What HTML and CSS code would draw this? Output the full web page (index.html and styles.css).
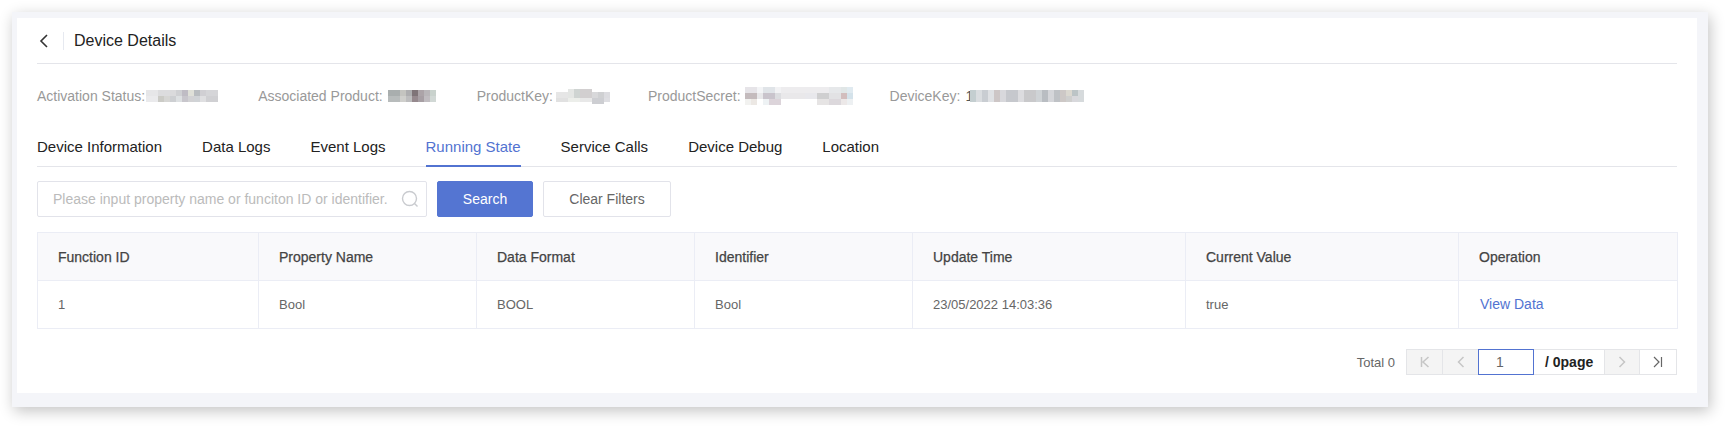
FILE: index.html
```html
<!DOCTYPE html>
<html lang="en">
<head>
<meta charset="utf-8">
<title>Device Details</title>
<link rel="stylesheet" href="styles.css">
</head>
<body>
<div class="frame">
  <main class="panel">
    <header class="title-bar">
      <svg class="back" width="10" height="14" viewBox="0 0 10 14"><path d="M8 1 2 7l6 6" fill="none" stroke="#333" stroke-width="1.6"/></svg>
      <span class="title-sep"></span>
      <h1 class="title">Device Details</h1>
    </header>

    <section class="meta">
      <div class="meta-item meta-status"><span>Activation Status:</span>
        <svg class="redact" width="72" height="12" shape-rendering="crispEdges">
          <rect x="0" width="12" height="6" fill="#e6e6e8"/><rect x="12" width="12" height="6" fill="#dcdcde"/><rect x="24" width="6" height="6" fill="#dadadc"/><rect x="30" width="6" height="6" fill="#cfd0d3"/><rect x="36" width="6" height="6" fill="#bfbcc4"/><rect x="42" width="6" height="6" fill="#dfe0d8"/><rect x="48" width="6" height="6" fill="#b9bdc0"/><rect x="54" width="6" height="6" fill="#d0cfd3"/><rect x="60" width="12" height="6" fill="#d5d5d8"/>
          <rect x="0" y="6" width="12" height="6" fill="#eaeaec"/><rect x="12" y="6" width="6" height="6" fill="#cbcbc6"/><rect x="18" y="6" width="6" height="6" fill="#d6d6d4"/><rect x="24" y="6" width="6" height="6" fill="#cdcfd2"/><rect x="30" y="6" width="6" height="6" fill="#dde0e2"/><rect x="36" y="6" width="6" height="6" fill="#c8c6cc"/><rect x="42" y="6" width="6" height="6" fill="#d2d2d4"/><rect x="48" y="6" width="6" height="6" fill="#d0d3d6"/><rect x="54" y="6" width="6" height="6" fill="#dfdfe1"/><rect x="60" y="6" width="12" height="6" fill="#d0d0d3"/>
        </svg>
      </div>
      <div class="meta-item meta-assoc"><span>Associated Product:</span>
        <svg class="redact" width="48" height="12" shape-rendering="crispEdges">
          <rect x="0" width="12" height="6" fill="#a9aeae"/><rect x="12" width="6" height="6" fill="#c4c4c0"/><rect x="18" width="6" height="6" fill="#aeaeb0"/><rect x="24" width="6" height="6" fill="#7f7478"/><rect x="30" width="6" height="6" fill="#aca4a8"/><rect x="36" width="6" height="6" fill="#b9b6b9"/><rect x="42" width="6" height="6" fill="#c9d2cd"/>
          <rect x="0" y="6" width="12" height="6" fill="#b8bcbc"/><rect x="12" y="6" width="6" height="6" fill="#cfcfcc"/><rect x="18" y="6" width="6" height="6" fill="#bdbdbe"/><rect x="24" y="6" width="6" height="6" fill="#96898e"/><rect x="30" y="6" width="6" height="6" fill="#a79fa4"/><rect x="36" y="6" width="6" height="6" fill="#c0bcc0"/><rect x="42" y="6" width="6" height="6" fill="#d1d8d5"/>
        </svg>
      </div>
      <div class="meta-item meta-key"><span>ProductKey:</span>
        <svg class="redact" width="54" height="15" shape-rendering="crispEdges">
          <rect x="0" y="3" width="12" height="6" fill="#e6e6e6"/><rect x="12" y="0" width="6" height="9" fill="#e4e6e4"/><rect x="18" y="0" width="6" height="9" fill="#cfd4d2"/><rect x="24" y="0" width="12" height="9" fill="#d2cfd0"/><rect x="36" y="3" width="6" height="6" fill="#d8d8da"/><rect x="42" y="3" width="6" height="6" fill="#cfd0d2"/><rect x="48" y="3" width="6" height="6" fill="#dcdce0"/>
          <rect x="0" y="9" width="12" height="4" fill="#e1e1e1"/><rect x="12" y="9" width="12" height="4" fill="#eceeea"/><rect x="24" y="9" width="12" height="4" fill="#e8e8e8"/><rect x="36" y="9" width="12" height="6" fill="#cdced2"/><rect x="48" y="9" width="6" height="4" fill="#dedee2"/>
        </svg>
      </div>
      <div class="meta-item meta-secret"><span>ProductSecret:</span>
        <svg class="redact" width="108" height="18" shape-rendering="crispEdges">
          <rect x="0" y="0" width="12" height="6" fill="#e6e4e8"/><rect x="12" y="0" width="6" height="6" fill="#f3f4f6"/><rect x="18" y="0" width="12" height="6" fill="#e0e4e8"/><rect x="30" y="0" width="6" height="6" fill="#f2f2f4"/><rect x="36" y="0" width="48" height="6" fill="#edecee"/><rect x="84" y="0" width="12" height="6" fill="#e6e8ea"/><rect x="96" y="0" width="6" height="6" fill="#e0e6e6"/><rect x="102" y="0" width="6" height="6" fill="#e0eaf0"/>
          <rect x="0" y="6" width="12" height="6" fill="#c4bbbd"/><rect x="12" y="6" width="6" height="6" fill="#e8e8ea"/><rect x="18" y="6" width="12" height="6" fill="#c9c4cc"/><rect x="30" y="6" width="6" height="6" fill="#dcdde0"/><rect x="36" y="6" width="24" height="6" fill="#e9e8ea"/><rect x="60" y="6" width="12" height="6" fill="#e8e8ec"/><rect x="72" y="6" width="12" height="6" fill="#cfcfd0"/><rect x="84" y="6" width="12" height="6" fill="#e2e2e4"/><rect x="96" y="6" width="6" height="6" fill="#d2bdbd"/><rect x="102" y="6" width="6" height="6" fill="#d4e2ea"/>
          <rect x="0" y="12" width="6" height="6" fill="#f2f2f0"/><rect x="6" y="12" width="6" height="6" fill="#ece8e4"/><rect x="18" y="12" width="6" height="6" fill="#eef2f4"/><rect x="24" y="12" width="12" height="6" fill="#dcd4da"/><rect x="72" y="12" width="12" height="6" fill="#e6e4e4"/><rect x="84" y="12" width="12" height="6" fill="#dcd8dc"/><rect x="96" y="12" width="6" height="6" fill="#ece8e8"/><rect x="102" y="12" width="6" height="6" fill="#edf0f2"/>
        </svg>
      </div>
      <div class="meta-item meta-device"><span>DeviceKey:</span>
        <span class="meta-value">1</span>
        <svg class="redact redact-device" width="114" height="12" shape-rendering="crispEdges">
          <rect x="0" width="6" height="12" fill="#c4ced0"/><rect x="6" width="6" height="12" fill="#dadde0"/><rect x="12" width="6" height="12" fill="#c9cdd2"/><rect x="18" width="6" height="12" fill="#dfe1e4"/><rect x="24" width="6" height="12" fill="#cdc6c6"/><rect x="30" width="6" height="12" fill="#d8d8dc"/><rect x="36" width="12" height="12" fill="#c6c8cd"/><rect x="48" width="6" height="12" fill="#dcdcdf"/><rect x="54" width="12" height="12" fill="#c9c9cb"/><rect x="66" width="6" height="12" fill="#cfd3d6"/><rect x="72" width="6" height="12" fill="#b9bdc2"/><rect x="78" width="6" height="12" fill="#d5d6da"/><rect x="84" width="6" height="12" fill="#bfc2c6"/><rect x="90" width="6" height="12" fill="#cdc8c6"/><rect x="96" width="6" height="6" fill="#dbd8d0"/><rect x="96" y="6" width="6" height="6" fill="#cfcfce"/><rect x="102" width="6" height="6" fill="#bcc4c6"/><rect x="102" y="6" width="6" height="6" fill="#d8d8dc"/><rect x="108" width="6" height="12" fill="#d6dadc"/>
        </svg>
      </div>
    </section>

    <nav class="tabs">
      <a class="tab">Device Information</a>
      <a class="tab">Data Logs</a>
      <a class="tab">Event Logs</a>
      <a class="tab tab-active">Running State</a>
      <a class="tab">Service Calls</a>
      <a class="tab">Device Debug</a>
      <a class="tab">Location</a>
    </nav>

    <form class="filters">
      <div class="search-box">
        <input class="search-input" type="text" placeholder="Please input property name or funciton ID or identifier.">
        <svg class="search-icon" width="18" height="18" viewBox="0 0 18 18"><circle cx="8.5" cy="8.5" r="7" fill="none" stroke="#c9cbcf" stroke-width="1.4"/><path d="m13.5 13.5 3 3" fill="none" stroke="#c9cbcf" stroke-width="1.4"/></svg>
      </div>
      <button class="btn btn-primary" type="button">Search</button>
      <button class="btn btn-plain" type="button">Clear Filters</button>
    </form>

    <table class="data-table">
      <thead>
        <tr>
          <th class="col-id">Function ID</th>
          <th class="col-std">Property Name</th>
          <th class="col-std">Data Format</th>
          <th class="col-std">Identifier</th>
          <th class="col-time">Update Time</th>
          <th class="col-value">Current Value</th>
          <th class="col-op">Operation</th>
        </tr>
      </thead>
      <tbody>
        <tr>
          <td>1</td>
          <td>Bool</td>
          <td>BOOL</td>
          <td>Bool</td>
          <td>23/05/2022 14:03:36</td>
          <td>true</td>
          <td><a class="link">View Data</a></td>
        </tr>
      </tbody>
    </table>

    <footer class="pager">
      <span class="pager-total">Total 0</span>
      <div class="pager-group">
        <span class="pg-btn pg-disabled"><svg width="12" height="12" viewBox="0 0 12 12"><path d="M2.5 1v10M9.5 1 4 6l5.500 5" fill="none" stroke="#c6c6c6" stroke-width="1.500"/></svg></span>
        <span class="pg-btn pg-disabled"><svg width="10" height="12" viewBox="0 0 10 12"><path d="M7.500 1 2.500 6l5 5" fill="none" stroke="#c6c6c6" stroke-width="1.500"/></svg></span>
        <input class="pg-input" type="text" value="1">
        <span class="pg-count">/ 0page</span>
        <span class="pg-btn pg-disabled pg-next"><svg width="10" height="12" viewBox="0 0 10 12"><path d="m2.500 1 5 5-5 5" fill="none" stroke="#c6c6c6" stroke-width="1.500"/></svg></span>
        <span class="pg-btn pg-last"><svg width="12" height="12" viewBox="0 0 12 12"><path d="m2 1 5 5-5 5M9.500 1v10" fill="none" stroke="#666" stroke-width="1.200"/></svg></span>
      </div>
    </footer>
  </main>
</div>
</body>
</html>
```

FILE: styles.css
```css
* { box-sizing: border-box; }

html, body { height: 100%; }

body {
  margin: 0;
  padding: 12px 20px 20px 12px;
  background: #fff;
  font-family: "Liberation Sans", Arial, sans-serif;
  font-size: 14px;
  color: #333;
  overflow: hidden;
}

.frame {
  height: 395px;
  padding: 6px 11px 14px 5px;
  background: #f4f5f9;
  box-shadow: 2px 4px 14px rgba(0, 0, 0, 0.24);
}

.panel {
  height: 375px;
  padding: 0 20px;
  background: #fff;
}

/* Title */
.title-bar {
  display: flex;
  align-items: center;
  height: 46px;
  border-bottom: 1px solid #e4e5ea;
}

.back { margin-left: 2px; flex: none; }

.title-sep {
  width: 1px;
  height: 18px;
  margin: 0 10px 0 14px;
  background: #e6e9f0;
}

.title {
  margin: 0;
  font-size: 16px;
  font-weight: 400;
  color: #222;
}

/* Meta row */
.meta {
  display: flex;
  align-items: center;
  height: 28px;
  margin-top: 18px;
  color: #999;
  font-size: 14px;
}

.meta-item { display: flex; align-items: center; }

.meta-status span { margin-right: 1px; }
.meta-assoc { margin-left: 40px; }
.meta-assoc span { margin-right: 5px; }
.meta-key { margin-left: 41px; }
.meta-key span { margin-right: 3px; }
.meta-secret { margin-left: 38px; }
.meta-secret span { margin-right: 4px; }
.meta-device { margin-left: 37px; }
.meta-device > span:first-child { margin-right: 5px; }

.redact { flex: none; display: block; }
.redact-device { margin-left: -3px; }
.meta-value { color: #555; }

/* Tabs */
.tabs {
  display: flex;
  gap: 40px;
  height: 43px;
  margin-top: 14px;
  border-bottom: 1px solid #e4e5ea;
}

.tab {
  height: 43px;
  padding-top: 13px;
  font-size: 15px;
  line-height: 20px;
  color: #222;
}

.tab-active {
  color: #5273d1;
  border-bottom: 2px solid #5273d1;
}

/* Filters */
.filters {
  display: flex;
  margin-top: 14px;
}

.search-box {
  position: relative;
  width: 390px;
  height: 36px;
  margin-right: 10px;
}

.search-input {
  width: 100%;
  height: 100%;
  padding: 0 38px 0 15px;
  border: 1px solid #e2e3ea;
  border-radius: 2px;
  font: 14px "Liberation Sans", Arial, sans-serif;
  outline: none;
}

.search-input::placeholder { color: #bbb; opacity: 1; }

.search-icon {
  position: absolute;
  right: 8px;
  top: 9px;
}

.btn {
  height: 36px;
  border-radius: 2px;
  font: 14px "Liberation Sans", Arial, sans-serif;
  cursor: pointer;
}

.btn-primary {
  width: 96px;
  margin-right: 10px;
  border: 1px solid #5475d2;
  background: #5475d2;
  color: #fff;
}

.btn-plain {
  width: 128px;
  border: 1px solid #e2e3ea;
  background: #fff;
  color: #666;
}

/* Table */
.data-table {
  width: 1640px;
  margin-top: 15px;
  border-collapse: collapse;
  table-layout: fixed;
  font-size: 13px;
}

.data-table th,
.data-table td {
  height: 48px;
  padding: 0 0 0 20px;
  border: 1px solid #ebedf5;
  text-align: left;
  color: #666;
  font-weight: 400;
}

.data-table th {
  background: #f9f9fb;
  font-size: 14px;
  color: #444;
  -webkit-text-stroke: 0.25px #444;
}

.col-id { width: 221px; }
.col-std { width: 218px; }
.col-time { width: 273px; }
.col-value { width: 273px; }
.col-op { width: 219px; }

.link {
  margin-left: 1px;
  color: #5273d1;
  font-size: 14px;
  vertical-align: 1px;
  cursor: pointer;
}

/* Pager */
.pager {
  display: flex;
  justify-content: flex-end;
  align-items: center;
  height: 26px;
  margin-top: 20px;
}

.pager-total {
  margin-right: 11px;
  color: #666;
  font-size: 13px;
}

.pager-group {
  display: flex;
  height: 26px;
  border: 1px solid #e4e5e8;
}

.pg-btn {
  display: flex;
  align-items: center;
  justify-content: center;
  width: 36px;
  border-right: 1px solid #e4e5e8;
  background: #f4f4f4;
}

.pg-btn:nth-child(2) { width: 35px; border-right: 0; }

.pg-last { width: 36px; background: #fff; border-right: 0; }

.pg-next { width: 35px; }

.pg-input {
  width: 56px;
  height: 26px;
  margin-top: -1px;
  padding: 0 0 0 17px;
  border: 1px solid #5273d1;
  font: 14px "Liberation Sans", Arial, sans-serif;
  color: #666;
  outline: none;
}

.pg-count {
  width: 71px;
  padding-left: 11px;
  border-right: 1px solid #e4e5e8;
  line-height: 24px;
  font-size: 14px;
  font-weight: 700;
  color: #222;
}
```
